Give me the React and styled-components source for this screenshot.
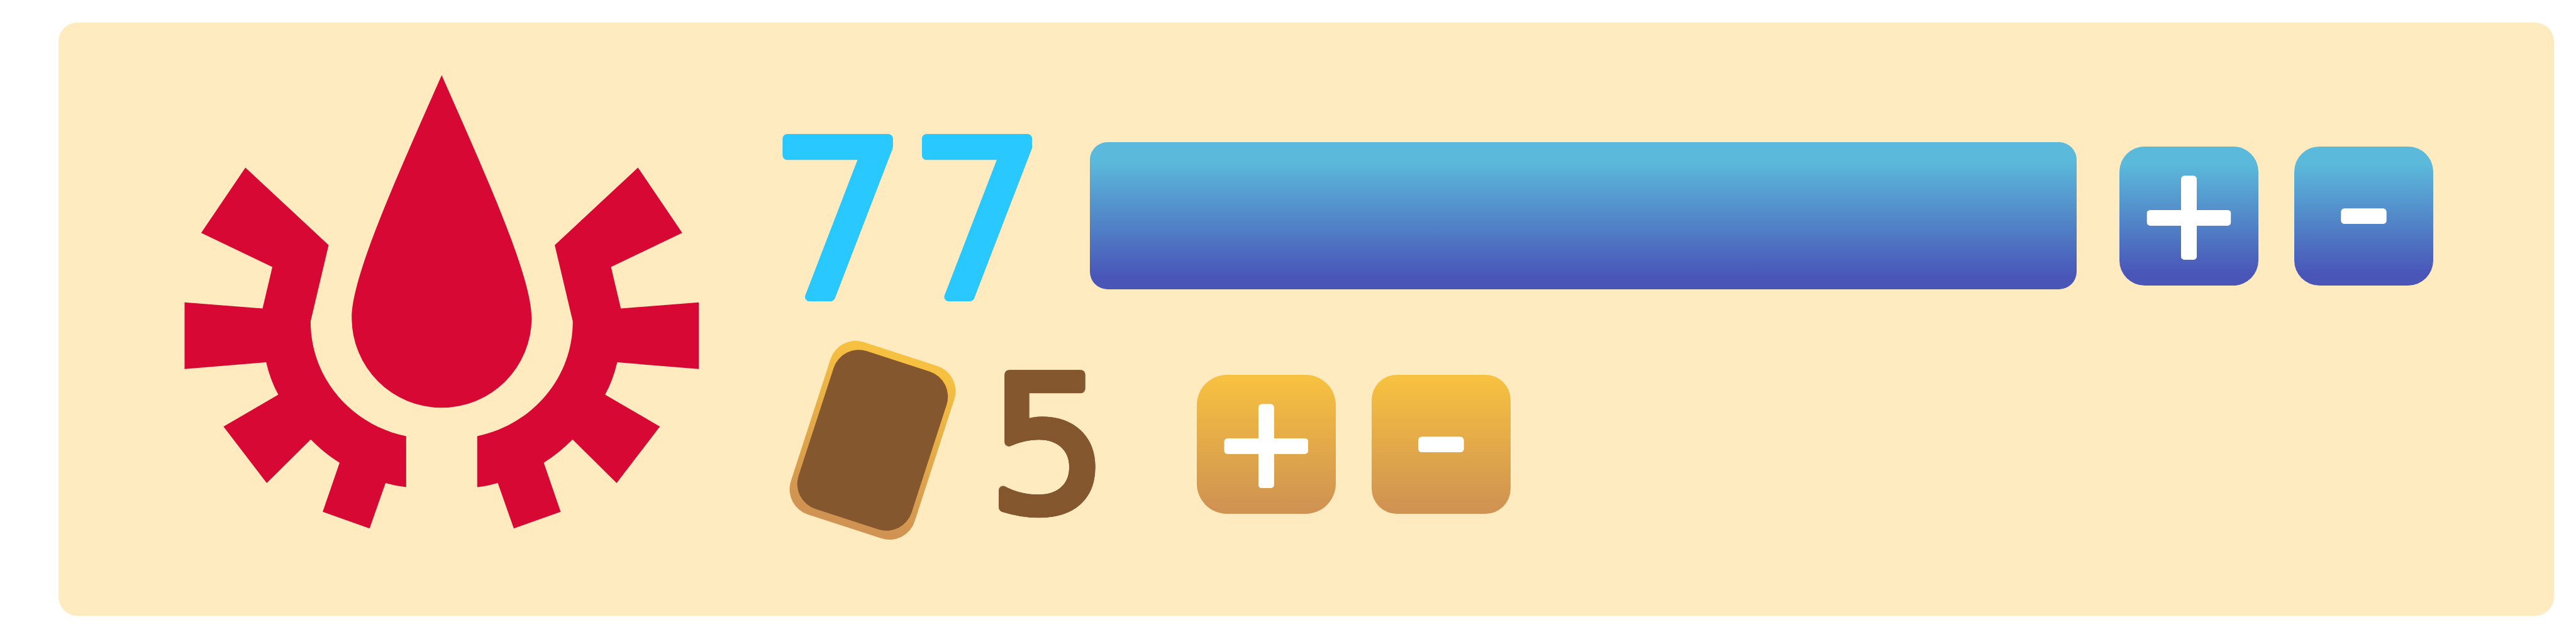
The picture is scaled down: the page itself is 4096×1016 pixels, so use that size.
import React from "react";
import styled, { createGlobalStyle } from "styled-components";

const blue = "linear-gradient(180deg, #5bbadb 12%, #4955b7 92%)";
const gold = "linear-gradient(180deg, #f6c040 4%, #d09352 96%)";

// A ring of solid shadows thickens the glyphs and rounds their corners.
const rounded = (radius, colour) =>
  Array.from({ length: 24 }, (_, i) => {
    const angle = (i * Math.PI) / 12;
    const x = (Math.cos(angle) * radius).toFixed(2);
    const y = (Math.sin(angle) * radius).toFixed(2);
    return `${x}px ${y}px 0 ${colour}`;
  }).join(", ");

const GlobalStyle = createGlobalStyle`
  * { box-sizing: border-box; }
  body {
    margin: 0;
    background: #ffffff;
    font-family: "DejaVu Sans", sans-serif;
  }
`;

const Panel = styled.main`
  display: flex;
  align-items: flex-start;
  gap: 110px;
  margin: 36px 35px 37px 93px;
  padding: 83px 192px 119px 200px;
  border-radius: 30px;
  background: #ffebbf;
`;

const Emblem = styled.svg`
  flex: none;
  width: 819px;
  height: 722px;
  fill: #d70833;
`;

const Stats = styled.div`
  flex: 1;
  display: flex;
  flex-direction: column;
  gap: 25px;
  padding-top: 40px;
`;

const StatRow = styled.div`
  display: flex;
  align-items: center;
  gap: ${(p) => p.$gap}px;
`;

const Value = styled.output`
  padding-top: ${(p) => p.$drop}px;
  font-size: ${(p) => p.$size}px;
  line-height: 1;
  color: ${(p) => p.$colour};
  text-shadow: ${(p) => rounded(6, p.$colour)};
`;

const Meter = styled.div`
  flex: 1;
  height: 234px;
  border-radius: 28px;
  background: ${blue};
`;

const Buttons = styled.div`
  display: flex;
  gap: 57px;
  margin-left: ${(p) => p.$indent || 0}px;
`;

const StepButton = styled.button`
  display: flex;
  align-items: center;
  justify-content: center;
  width: 221px;
  height: 221px;
  padding: 0 0 6px;
  border: 0;
  border-radius: ${(p) => p.$radius}px;
  background: ${(p) => p.$fill};
  color: #ffffff;
  font-family: "DejaVu Sans", sans-serif;
  font-size: 200px;
  line-height: 1;
  text-shadow: ${rounded(4, "#ffffff")};
  cursor: pointer;
`;

const MinusButton = styled(StepButton)`
  padding-bottom: 20px;
  font-family: Inter, sans-serif;
`;

const Card = styled.div`
  width: 207px;
  height: 288px;
  margin: 0 0 12px 62px;
  padding: 12px 9px;
  border-radius: 42px;
  background: ${gold};
  transform: rotate(18deg);
`;

const CardFace = styled.div`
  height: 100%;
  border-radius: 42px;
  background: #85572f;
`;

function DropGear() {
  const half =
    "M425 289.6L569.3 424.1L538 556.4C538 656 610 736 703.7 755.2V843.6Q686 842 668 836.6L640.3 915.4L559 886.4L588.3 801.3Q562 785 538.3 761.1L462 836.6L387 738.6L482 683.4Q468 658 461 627.2L319.5 638.9V523.2L454.7 533.9L471.7 462.1L348.3 402.7Z";
  return (
    <Emblem viewBox="319 129 893 787" role="img" aria-label="Blood">
      <path d="M765.3 129.5C692.7 294.5 609.3 476 609.3 550A156 156 0 0 0 921.3 550C921.3 476 837.9 294.5 765.3 129.5Z" />
      <path d={half} />
      <path d={half} transform="translate(1530.6 0) scale(-1 1)" />
    </Emblem>
  );
}

export default function App() {
  const [points, setPoints] = React.useState(77);
  const [cards, setCards] = React.useState(5);
  return (
    <>
      <GlobalStyle />
      <Panel>
        <DropGear />
        <Stats>
          <StatRow $gap={68}>
            <Value $size={348} $drop={20} $colour="#29c8ff">{points}</Value>
            <Meter role="progressbar" aria-label="Points" aria-valuenow={points} />
            <Buttons>
              <StepButton $fill={blue} $radius={40} onClick={() => setPoints(points + 1)}>+</StepButton>
              <MinusButton $fill={blue} $radius={40} onClick={() => setPoints(points - 1)}>-</MinusButton>
            </Buttons>
          </StatRow>
          <StatRow $gap={80}>
            <Card><CardFace /></Card>
            <Value $size={300} $drop={8} $colour="#85572f">{cards}</Value>
            <Buttons $indent={61}>
              <StepButton $fill={gold} $radius={48} onClick={() => setCards(cards + 1)}>+</StepButton>
              <MinusButton $fill={gold} $radius={40} onClick={() => setCards(cards - 1)}>-</MinusButton>
            </Buttons>
          </StatRow>
        </Stats>
      </Panel>
    </>
  );
}
